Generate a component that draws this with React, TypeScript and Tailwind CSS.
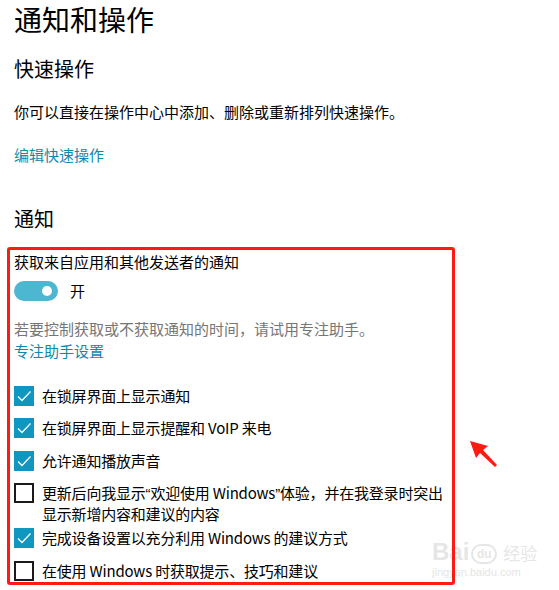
import React from "react";

const FONT = "font-['Segoe_UI','Noto_Sans_CJK_SC',sans-serif]";
const Q = "font-['Liberation_Sans',sans-serif]";

type Item = {
  label: React.ReactNode;
  checked: boolean;
  spacing: string;
};

const ITEMS: Item[] = [
  { label: "在锁屏界面上显示通知", checked: true, spacing: "mt-[24px]" },
  { label: "在锁屏界面上显示提醒和 VoIP 来电", checked: true, spacing: "mt-[12px]" },
  { label: "允许通知播放声音", checked: true, spacing: "mt-[13px]" },
  {
    label: (
      <>
        更新后向我显示<span className={Q}>“</span>欢迎使用 Windows<span className={Q}>”</span>
        体验，并在我登录时突出
        <br />
        显示新增内容和建议的内容
      </>
    ),
    checked: false,
    spacing: "mt-[12px]",
  },
  { label: "完成设备设置以充分利用 Windows 的建议方式", checked: true, spacing: "mt-[4px]" },
  { label: "在使用 Windows 时获取提示、技巧和建议", checked: false, spacing: "mt-[13px]" },
];

const Checkbox = ({ checked }: { checked: boolean }) =>
  checked ? (
    <span className="flex h-[20px] w-[20px] shrink-0 items-center justify-center bg-[#0f97c0]">
      <svg width="20" height="20" viewBox="0 0 20 20" fill="none">
        <path d="M4 10.5 L8 14.5 L16.5 5.5" stroke="white" strokeWidth="1.3" />
      </svg>
    </span>
  ) : (
    <span className="h-[20px] w-[20px] shrink-0 border-2 border-[#1a1a1a] bg-white" />
  );

export default function App() {
  return (
    <div className={`relative h-[590px] w-[559px] overflow-hidden bg-white px-[14px] text-black ${FONT}`}>
      <h1 className="pt-[1px] text-[28px] leading-[36px] font-normal">通知和操作</h1>

      <h2 className="mt-[18px] text-[20px] leading-[28px] font-normal">快速操作</h2>
      <p className="mt-[19px] text-[15px] leading-[20px]">
        你可以直接在操作中心中添加、删除或重新排列快速操作。
      </p>
      <p className="mt-[23px] text-[15px] leading-[20px] text-[#0f88ab]">编辑快速操作</p>

      <h2 className="mt-[40px] text-[20px] leading-[28px] font-normal">通知</h2>

      <div className="relative z-10 mt-[14px] ml-[-7px] w-[448px] rounded-[3px] border-[3px] border-[#ff1a12] pt-[2px] pb-[1px] pl-[4px]">
        <p className="text-[15px] leading-[20px]">获取来自应用和其他发送者的通知</p>

        <div className="mt-[9px] flex items-center gap-[12px]">
          <span className="flex h-[20px] w-[44px] items-center justify-end rounded-full bg-[#4db6d1] pr-[6px]">
            <span className="h-[10px] w-[10px] rounded-full bg-white" />
          </span>
          <span className="text-[15px] leading-[20px]">开</span>
        </div>

        <p className="mt-[17px] text-[15px] leading-[22px] text-[#767676]">
          若要控制获取或不获取通知的时间，请试用专注助手。
        </p>
        <p className="text-[15px] leading-[22px] text-[#0f88ab]">专注助手设置</p>

        {ITEMS.map((item, i) => (
          <div key={i} className={`flex items-start gap-[8px] ${item.spacing}`}>
            <Checkbox checked={item.checked} />
            <span className="whitespace-nowrap text-[15px] leading-[20px] tracking-[-0.2px]">{item.label}</span>
          </div>
        ))}
      </div>

      {/* red arrow annotation */}
      <svg className="absolute left-[466px] top-[436px]" width="36" height="34" viewBox="0 0 36 34">
        <polygon points="4,5 22,10 17,14 31,29 29,31 14,17 10,22" fill="#ff1a12" />
      </svg>

      {/* watermark */}
      <div className="absolute left-[432px] top-[540px] z-0 select-none text-[#e6e6e6]">
        <div className="flex items-end gap-[2px] font-['Liberation_Sans',sans-serif] text-[24px] leading-[24px] font-bold">
          <span>Bai</span>
          <span className="flex h-[20px] w-[26px] items-center justify-center rounded-full border-2 border-[#e6e6e6] text-[12px] leading-[12px]">
            du
          </span>
          <span className="ml-[4px] font-['Noto_Sans_CJK_SC',sans-serif] text-[17px] leading-[22px] font-normal">
            经验
          </span>
        </div>
        <div className="mt-[2px] font-['Liberation_Sans',sans-serif] text-[11px] leading-[12px]">
          jingyan.baidu.com
        </div>
      </div>
    </div>
  );
}
